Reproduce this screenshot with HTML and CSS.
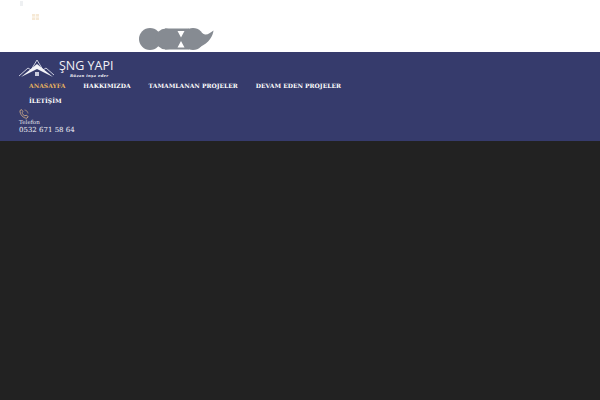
FILE: index.html
```html
<!DOCTYPE html>
<html lang="tr">

<head>
    <meta charset="utf-8">
    <title>ŞNG Yapı</title>
    <link rel="stylesheet" href="styles.css">
</head>

<body>
<div class="topbar">
    <div class="topIcons">
        <i class="dot"></i>
        <svg class="mail" width="7" height="6" viewBox="0 0 7 6">
            <rect width="7" height="6" fill="#f6e9d6"/>
            <path d="M0 3 H7 M3.5 0 V6" stroke="#fdf9f2" stroke-width="1"/>
        </svg>
    </div>
    <svg class="blob" width="76" height="22" viewBox="0 0 76 22">
        <g fill="#868b92">
            <circle cx="11" cy="11" r="11"/>
            <circle cx="27" cy="11" r="10.5"/>
            <rect x="26" y=".5" width="24" height="21"/>
            <circle cx="54" cy="11" r="11"/>
            <path d="M63 5 C67 8 70 6 74.5 2.5 C74 8 70 15 61 19 Z"/>
        </g>
        <path fill="#ffffff" d="M38.5 3 L45.5 3 L42 9.5 Z M42 13 L45.5 19.5 L38.5 19.5 Z"/>
    </svg>
</div>

<div class="header">
    <div class="logo">
        <svg class="logoMark" width="36" height="19" viewBox="0 0 36 19">
            <path d="M0 17 L9 9 L12 11 L18 1 L24 11 L27 9 L35 16" fill="none" stroke="#c9cbdc" stroke-width="1"/>
            <path d="M2 18 L18 5 L34 18 L18 10 Z" fill="#f4f4f8"/>
            <rect x="16" y="13" width="4" height="4" fill="#c9cbdc"/>
        </svg>
        <div class="logoText">
            <div class="logoName">ŞNG YAPI</div>
            <div class="logoSub">Rüzan inşa eder</div>
        </div>
    </div>
    <ul class="menu">
        <li class="active">ANASAYFA</li>
        <li>HAKKIMIZDA</li>
        <li>TAMAMLANAN PROJELER</li>
        <li>DEVAM EDEN PROJELER</li>
        <li>İLETİŞİM</li>
    </ul>
    <div class="contact">
        <svg class="phone" width="10" height="10" viewBox="0 0 10 10">
            <path d="M1 1.5 L2.6 .6 L4 2.8 L3 3.8 C3.4 5 4.6 6.4 6 7 L7 6 L9.2 7.6 L8 9.2 C4.5 9.4 .6 5.5 1 1.5 Z" fill="none" stroke="#d9b48a" stroke-width=".8"/>
            <path d="M5.5 1 C7.5 1.2 8.8 2.5 9 4.5" fill="none" stroke="#d9b48a" stroke-width=".6"/>
        </svg>
        <div class="contactLabel">Telefon</div>
        <div class="contactNumber">0532 671 58 64</div>
    </div>
</div>

<div class="content"></div>
</body>

</html>
```

FILE: styles.css
```css
* {
    margin: 0;
    padding: 0;
}

html, body {
    height: 100%;
}

body {
    display: flex;
    flex-direction: column;
    background-color: #222222;
    font-family: "DejaVu Serif", serif;
    overflow: hidden;
}

.topbar {
    height: 52px;
    background-color: #FFFFFF;
    display: flex;
    flex-shrink: 0;
}

.topIcons {
    width: 139px;
    padding: 1px 0 0 20px;
    box-sizing: border-box;
}

.dot {
    display: block;
    width: 3px;
    height: 5px;
    background-color: #eef0f2;
}

.mail {
    display: block;
    margin: 8px 0 0 12px;
}

.blob {
    margin-top: 28px;
    display: block;
}

.header {
    height: 89px;
    background-color: #363b6c;
    color: #FFFFFF;
    padding: 7px 0 0 19px;
    box-sizing: border-box;
    flex-shrink: 0;
}

.logo {
    display: flex;
    height: 19px;
}

.logoName {
    font-family: "Open Sans", sans-serif;
    font-size: 12.5px;
    line-height: 13px;
    color: #f1f1f6;
}

.logoSub {
    font-size: 3.8px;
    line-height: 5px;
    font-style: italic;
    font-weight: bold;
    letter-spacing: .3px;
    text-align: center;
    color: #f1f1f6;
    margin-top: 1px;
    margin-left: 6px;
}

.logoText {
    margin-left: 4px;
}

.menu {
    list-style: none;
    display: flex;
    flex-wrap: wrap;
    width: 340px;
    padding-left: 1px;
}

.menu li {
    font-size: 6px;
    font-weight: bold;
    line-height: 15px;
    padding: 0 9px;
    white-space: nowrap;
}

.menu li.active {
    color: #e9b45f;
}

.contact {
    margin-top: 1px;
}

.phone {
    display: block;
}

.contactLabel {
    font-size: 5.6px;
    line-height: 7px;
    color: #e4e4ee;
}

.contactNumber {
    font-size: 7px;
    line-height: 9px;
    color: #f1f1f6;
}

.content {
    flex: 1;
}
```
